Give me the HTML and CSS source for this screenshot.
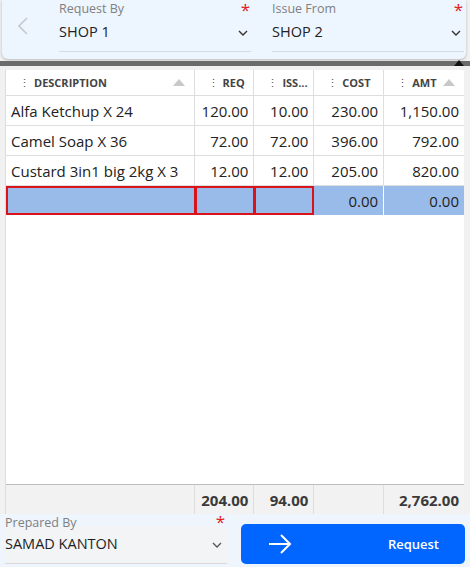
FILE: index.html
```html
<!DOCTYPE html>
<html>
<head>
<meta charset="utf-8">
<link rel="stylesheet" href="styles.css">
</head>
<body>
<div class="page">
  <header class="top">
    <div class="back">
      <svg width="14" height="20" viewBox="0 0 14 20"><path d="M11 2 L3 10 L11 18" fill="none" stroke="#c4c8cc" stroke-width="1.6"/></svg>
    </div>
    <div class="field">
      <div class="lrow"><span class="label">Request By</span><span class="req">*</span></div>
      <div class="vrow"><span class="value">SHOP 1</span>
      <svg class="chev" width="10" height="6" viewBox="0 0 10 6"><path d="M1 1 L5 5 L9 1" fill="none" stroke="#333" stroke-width="1.4"/></svg></div>
    </div>
    <div class="field">
      <div class="lrow"><span class="label">Issue From</span><span class="req">*</span></div>
      <div class="vrow"><span class="value">SHOP 2</span>
      <svg class="chev" width="10" height="6" viewBox="0 0 10 6"><path d="M1 1 L5 5 L9 1" fill="none" stroke="#333" stroke-width="1.4"/></svg></div>
    </div>
  </header>
  <div class="bar"><span class="tri"></span></div>
  <div class="gridwrap">
    <div class="grid">
      <div class="row head">
        <div class="c c1"><span class="dots">⋮</span>DESCRIPTION<span class="sort"></span></div>
        <div class="c c2"><span class="dots">⋮</span>REQ</div>
        <div class="c c3"><span class="dots">⋮</span>ISS...</div>
        <div class="c c4"><span class="dots">⋮</span>COST</div>
        <div class="c c5"><span class="dots">⋮</span>AMT<span class="sort"></span></div>
      </div>
      <div class="row">
        <div class="c c1">Alfa Ketchup X 24</div>
        <div class="c c2 n">120.00</div>
        <div class="c c3 n">10.00</div>
        <div class="c c4 n">230.00</div>
        <div class="c c5 n">1,150.00</div>
      </div>
      <div class="row">
        <div class="c c1">Camel Soap X 36</div>
        <div class="c c2 n">72.00</div>
        <div class="c c3 n">72.00</div>
        <div class="c c4 n">396.00</div>
        <div class="c c5 n">792.00</div>
      </div>
      <div class="row">
        <div class="c c1">Custard 3in1 big 2kg X 3</div>
        <div class="c c2 n">12.00</div>
        <div class="c c3 n">12.00</div>
        <div class="c c4 n">205.00</div>
        <div class="c c5 n">820.00</div>
      </div>
      <div class="row sel">
        <div class="c c1 err"></div>
        <div class="c c2 err"></div>
        <div class="c c3 err"></div>
        <div class="c c4 n">0.00</div>
        <div class="c c5 n">0.00</div>
      </div>
      <div class="fill"></div>
      <div class="row foot">
        <div class="c c1"></div>
        <div class="c c2 n">204.00</div>
        <div class="c c3 n">94.00</div>
        <div class="c c4 n"></div>
        <div class="c c5 n">2,762.00</div>
      </div>
    </div>
    <div class="vscroll"></div>
  </div>
  <footer class="bottom">
    <div class="pfield">
      <div class="plrow"><span class="plabel">Prepared By</span><span class="req">*</span></div>
      <div class="pvalue"><span>SAMAD KANTON</span>
        <svg class="pchev" width="10" height="6" viewBox="0 0 10 6"><path d="M1 1 L5 5 L9 1" fill="none" stroke="#555" stroke-width="1.3"/></svg>
      </div>
    </div>
    <button class="btn">
      <svg width="24" height="20" viewBox="0 0 24 20"><path d="M1 10 H22 M13 1 L22 10 L13 19" fill="none" stroke="#fff" stroke-width="2"/></svg>
      <span>Request</span>
    </button>
  </footer>
</div>
</body>
</html>
```
FILE: styles.css
```css
* { box-sizing: border-box; }
html, body { margin: 0; padding: 0; }
body {
  background: #f1f1f1;
  font-family: "Open Sans", "Noto Sans", sans-serif;
  color: #222;
  width: 470px;
  height: 567px;
  overflow: hidden;
}
.page { display: flex; flex-direction: column; height: 567px; }

.top {
  height: 59px;
  margin: 0 4px 0 2px;
  background: #edf5fe;
  border-radius: 0 0 6px 6px;
  box-shadow: 0 1px 3px rgba(0,0,0,0.25);
  display: flex;
  flex-shrink: 0;
}
.back { width: 57px; display: flex; align-items: center; padding-left: 14px; padding-bottom: 8px; }
.field { width: 192px; border-bottom: 1px solid #d5dbe2; height: 52px; margin-right: 21px; display: flex; flex-direction: column; }
.field:last-child { margin-right: 0; }
.lrow { display: flex; justify-content: space-between; align-items: flex-start; height: 17px; padding-top: 1px; }
.label { font-size: 12.5px; color: #808080; line-height: 16px; }
.lrow .req { margin-top: -1px; }
.req { color: #e02020; font-size: 17px; line-height: 20px; padding-right: 1px; }
.vrow { display: flex; justify-content: space-between; align-items: center; margin-top: 6px; height: 18px; }
.value { font-size: 14.5px; color: #222; line-height: 18px; }
.chev { margin-right: 3px; margin-top: 2px; }

.bar { height: 5px; margin-top: 2px; background: #6b6b6b; position: relative; flex-shrink: 0; }
.tri { position: absolute; right: 6px; top: -1px; width: 0; height: 0; border-left: 5px solid transparent; border-right: 5px solid transparent; border-bottom: 6px solid #111; }

.gridwrap { display: flex; padding-top: 4px; padding-left: 5px; flex: 1; min-height: 0; }
.grid { width: 459px; background: #fff; border-left: 1px solid #dcdcdc; display: flex; flex-direction: column; }
.vscroll { flex: 1; background: #f1f1f1; }
.row { display: flex; height: 30px; border-bottom: 1px solid #dedede; flex-shrink: 0; }
.c { border-right: 1px solid #dedede; display: flex; align-items: center; padding: 0 5px; font-size: 15px; white-space: nowrap; overflow: hidden; }
.c1 { width: 189px; }
.c2 { width: 60px; }
.c3 { width: 60px; }
.c4 { width: 70px; }
.c5 { width: 80px; border-right: none; }
.n { justify-content: flex-end; }

.head { height: 26px; }
.head .c { font-size: 11px; font-weight: 700; color: #444; padding-left: 13px; position: relative; }
.dots { font-weight: 400; color: #555; margin-right: 4px; font-size: 11px; }
.sort { position: absolute; right: 9px; top: 9px; width: 0; height: 0; border-left: 6px solid transparent; border-right: 6px solid transparent; border-bottom: 7px solid #c8c8c8; }

.sel { background: #99bbe9; border-bottom: none; height: 29px; }
.sel .c { border-right-color: #fff; }
.sel .err { border: 2px solid #d8141a; border-right-width: 1px; }
.sel .c3.err { border-right-width: 2px; }

.fill { flex: 1; }
.foot { background: #f2f2f2; border-top: 1px solid #bdbdbd; border-bottom: none; height: 30px; }
.foot .c { font-weight: 700; color: #3a3a3a; }

.bottom { height: 53px; background: #eef5fd; display: flex; padding-left: 5px; flex-shrink: 0; }
.pfield { width: 222px; display: flex; flex-direction: column; }
.plrow { display: flex; justify-content: space-between; align-items: flex-start; height: 12px; padding-top: 2px; position: relative; z-index: 1; }
.plrow .req { padding-right: 2px; margin-top: -3px; line-height: 17px; }
.plabel { font-size: 12.5px; color: #808080; line-height: 13px; }
.pvalue { margin-top: 0; height: 38px; background: #f3f4f5; border-bottom: 1px solid #d8d8d8; font-size: 14.5px; display: flex; align-items: center; justify-content: space-between; color: #1e1e1e; padding-bottom: 3px; }
.pchev { margin-right: 5px; margin-top: 4px; }
.btn {
  margin: 10px 0 0 14px;
  width: 224px; height: 40px;
  background: #0066ff;
  border: none; border-radius: 5px;
  color: #fff;
  display: flex; align-items: center;
  padding: 0 26px 0 27px;
  font-family: inherit;
  font-size: 13px; font-weight: 600;
  justify-content: space-between;
}
```
